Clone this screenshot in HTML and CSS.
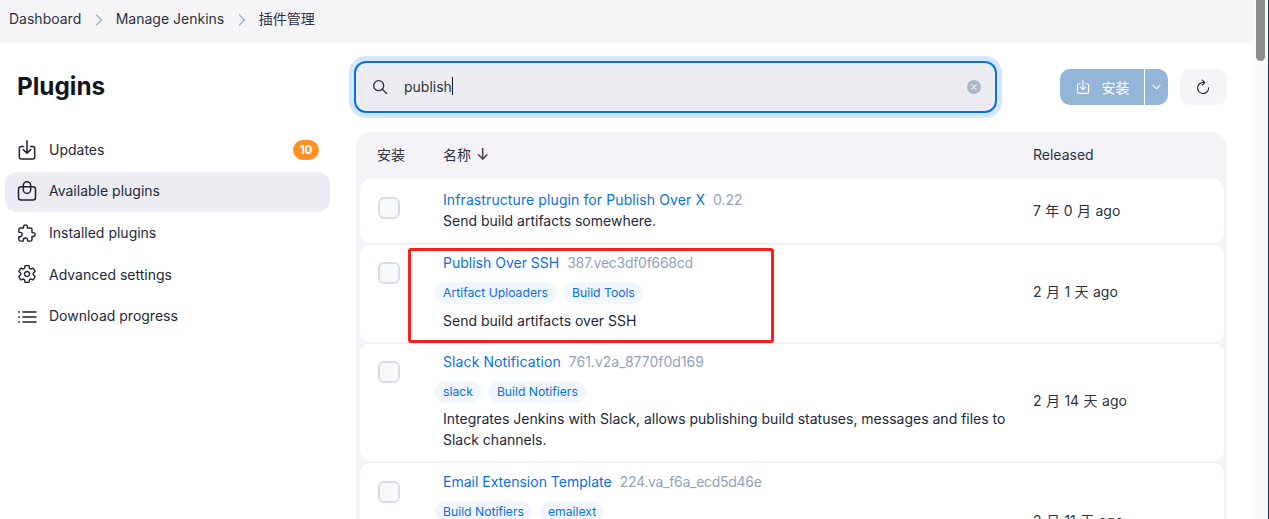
FILE: index.html
```html
<!DOCTYPE html>
<html lang="zh">
<head>
<meta charset="utf-8">
<title>Plugins</title>
<link rel="stylesheet" href="styles.css">
</head>
<body>
<div class="window">
  <div class="page">
    <nav class="crumbs">
      <a>Dashboard</a>
      <svg class="crumb-sep" viewBox="0 0 8 12"><path d="M1.500 1 6.500 6l-5 5"/></svg>
      <a>Manage Jenkins</a>
      <svg class="crumb-sep" viewBox="0 0 8 12"><path d="M1.500 1 6.500 6l-5 5"/></svg>
      <a>插件管理</a>
    </nav>
    <div class="layout">
      <aside class="side">
        <h1 class="side-title">Plugins</h1>
        <ul class="side-list">
          <li class="side-item">
            <svg class="side-icon" viewBox="0 0 20 20"><path d="M6.500 6.500H4.300a2 2 0 0 0-2 2V17a2 2 0 0 0 2 2h11.400a2 2 0 0 0 2-2V8.500a2 2 0 0 0-2-2h-2.200M10 .8V13M6.300 9.600 10 13.300l3.700-3.700"/></svg>
            <span>Updates</span><span class="badge">10</span>
          </li>
          <li class="side-item is-active">
            <svg class="side-icon" viewBox="0 0 20 20"><rect x="1.500" y="5.800" width="17" height="13.200" rx="2.500"/><path d="M6.300 5.800V4.500a3.700 3.700 0 0 1 7.400 0v1.300M6.300 5.800v2.700a3.700 4 0 0 0 7.400 0V5.800"/></svg>
            <span>Available plugins</span>
          </li>
          <li class="side-item">
            <svg class="side-icon puzzle" viewBox="0 0 512 512"><path d="M413.66 246.1H386a2 2 0 01-2-2v-77.24A38.86 38.86 0 00345.14 128H267.9a2 2 0 01-2-2V98.34c0-27.14-21.5-49.86-48.64-50.33a49.53 49.53 0 00-50.4 49.51V126a2 2 0 01-2 2H87.62A39.74 39.74 0 0048 167.62V238a2 2 0 002 2h26.91c29.37 0 53.68 25.48 54.09 54.85.42 29.87-23.51 57.15-53.29 57.15H50a2 2 0 00-2 2v70.38A39.74 39.74 0 0087.62 464H158a2 2 0 002-2v-20.93c0-30.28 24.75-56.35 55-57.06 30.1-.7 57 20.31 57 50.28V462a2 2 0 002 2h71.14A38.86 38.86 0 00384 425.14v-78a2 2 0 012-2h28.48c27.63 0 49.52-22.67 49.52-50.4s-23.2-48.64-50.34-48.64z"/></svg>
            <span>Installed plugins</span>
          </li>
          <li class="side-item">
            <svg class="side-icon puzzle" viewBox="0 0 512 512"><path d="M262.29 192.31a64 64 0 1057.4 57.4 64.13 64.13 0 00-57.4-57.4zM416.39 256a154.34 154.34 0 01-1.53 20.79l45.21 35.46a10.81 10.81 0 012.45 13.75l-42.77 74a10.81 10.81 0 01-13.14 4.59l-44.9-18.08a16.11 16.11 0 00-15.17 1.75A164.48 164.48 0 01325 400.8a15.94 15.94 0 00-8.82 12.14l-6.73 47.89a11.08 11.08 0 01-10.68 9.17h-85.54a11.11 11.11 0 01-10.69-8.87l-6.72-47.82a16.07 16.07 0 00-9-12.22 155.3 155.3 0 01-21.46-12.57 16 16 0 00-15.11-1.71l-44.89 18.07a10.81 10.81 0 01-13.14-4.58l-42.77-74a10.8 10.8 0 012.45-13.75l38.21-30a16.05 16.05 0 006-14.08c-.36-4.17-.58-8.33-.58-12.5s.21-8.27.58-12.35a16 16 0 00-6.07-13.94l-38.19-30A10.81 10.81 0 0149.48 186l42.77-74a10.81 10.81 0 0113.14-4.59l44.9 18.08a16.11 16.11 0 0015.17-1.75A164.48 164.48 0 01187 111.2a15.94 15.94 0 008.82-12.14l6.73-47.89A11.08 11.08 0 01213.23 42h85.54a11.11 11.11 0 0110.69 8.87l6.72 47.82a16.07 16.07 0 009 12.22 155.3 155.3 0 0121.46 12.57 16 16 0 0015.11 1.71l44.89-18.07a10.81 10.81 0 0113.14 4.58l42.77 74a10.8 10.8 0 01-2.45 13.75l-38.21 30a16.05 16.05 0 00-6.05 14.08c.33 4.14.55 8.3.55 12.47z"/></svg>
            <span>Advanced settings</span>
          </li>
          <li class="side-item">
            <svg class="side-icon" viewBox="0 0 20 20"><path d="M6 6h13M6 11h13M6 16h13M1.800 6h.6M1.800 11h.6M1.800 16h.6"/></svg>
            <span>Download progress</span>
          </li>
        </ul>
      </aside>
      <main class="main">
        <div class="toolbar">
          <div class="search">
            <svg class="search-icon" viewBox="0 0 16 16"><circle cx="6.700" cy="6.700" r="5"/><path d="m10.500 10.500 4 4"/></svg>
            <span class="search-text">publish</span><span class="caret"></span>
            <svg class="search-clear" viewBox="0 0 14 14"><circle cx="7" cy="7" r="7"/><path d="m4.800 4.800 4.400 4.400m0-4.400-4.400 4.400"/></svg>
          </div>
          <div class="split">
            <button class="btn-install">
              <svg class="btn-icon" viewBox="0 0 20 20"><path d="M6.500 6H4.800A1.800 1.800 0 0 0 3 7.800v8.400A1.800 1.800 0 0 0 4.800 18h10.400a1.800 1.800 0 0 0 1.800-1.800V7.800A1.800 1.800 0 0 0 15.200 6h-1.700M10 1.500V13M6.500 9.800 10 13.300l3.500-3.500"/></svg>
              <span>安装</span>
            </button>
            <button class="btn-caret"><svg class="btn-chevron" viewBox="0 0 10 6"><path d="m1 1 4 4 4-4"/></svg></button>
          </div>
          <button class="btn-refresh">
            <svg class="refresh-icon" viewBox="0 0 20 20"><path d="M10.800 4.200A6.500 6.500 0 1 0 16 10.500M8.500 1.200l3 3-3 3"/></svg>
          </button>
        </div>
        <div class="table">
          <div class="thead">
            <span class="col-check col-check-head">安装</span>
            <span class="col-name">名称 <span class="sort">↓</span></span>
            <span class="col-date">Released</span>
          </div>
          <div class="row row-short">
            <div class="col-check"><span class="check"></span></div>
            <div class="col-name">
              <div class="title-line"><a class="title title-wide">Infrastructure plugin for Publish Over X</a><span class="version">0.22</span></div>
              <p class="desc">Send build artifacts somewhere.</p>
            </div>
            <div class="col-date">7 年 0 月 ago</div>
          </div>
          <div class="row">
            <div class="col-check"><span class="check"></span></div>
            <div class="col-name">
              <div class="title-line"><a class="title">Publish Over SSH</a><span class="version version-tight">387.vec3df0f668cd</span></div>
              <div class="tags"><span class="tag">Artifact Uploaders</span><span class="tag">Build Tools</span></div>
              <p class="desc">Send build artifacts over SSH</p>
            </div>
            <div class="col-date">2 月 1 天 ago</div>
          </div>
          <div class="row">
            <div class="col-check"><span class="check"></span></div>
            <div class="col-name">
              <div class="title-line"><a class="title title-wide">Slack Notification</a><span class="version">761.v2a_8770f0d169</span></div>
              <div class="tags"><span class="tag">slack</span><span class="tag">Build Notifiers</span></div>
              <p class="desc">Integrates Jenkins with Slack, allows publishing build statuses, messages and files to Slack channels.</p>
            </div>
            <div class="col-date">2 月 14 天 ago</div>
          </div>
          <div class="row">
            <div class="col-check"><span class="check"></span></div>
            <div class="col-name">
              <div class="title-line"><a class="title">Email Extension Template</a><span class="version version-tight">224.va_f6a_ecd5d46e</span></div>
              <div class="tags"><span class="tag">Build Notifiers</span><span class="tag">emailext</span></div>
              <p class="desc">This plugin allows administrators to create global templates for the Extended Email Publisher.</p>
            </div>
            <div class="col-date">2 月 11 天 ago</div>
          </div>
        </div>
      </main>
    </div>
    <div class="highlight"></div>
  </div>
  <div class="scrollbar"><div class="thumb"></div></div>
</div>
</body>
</html>
```
FILE: styles.css
```css
* { box-sizing: border-box; }
html, body { margin: 0; height: 100%; overflow: hidden; }
body {
  font-family: Inter, "Noto Sans CJK SC", sans-serif;
  font-size: 14px;
  line-height: 21px;
  color: #1f2330;
  background: #fff;
}
svg { display: block; fill: none; stroke: currentColor; stroke-linecap: round; stroke-linejoin: round; }
p, h1, ul { margin: 0; padding: 0; }
ul { list-style: none; }
button { border: 0; padding: 0; font: inherit; }

.window { display: flex; height: 519px; overflow: hidden; }
.page { flex: 1; min-width: 0; position: relative; overflow: hidden; }
.scrollbar { width: 16px; flex: none; background: #fafafa; padding: 0 3px; border-right: 1px solid #1b3b72; }
.thumb { width: 9px; height: 61px; background: #8b8b8b; border-radius: 0 0 5px 5px; }

.crumbs {
  height: 43px;
  background: #f5f5f8;
  display: flex;
  align-items: center;
  padding: 0 0 7px 9px;
  color: #2d3140;
}
.crumb-sep { width: 8px; height: 12px; margin: 3px 13px 0 13.500px; color: #a3b2c7; stroke-width: 1.400; }

.layout { display: flex; }
.side { width: 325px; margin-left: 5px; flex: none; }
.side-title { font-size: 24.300px; line-height: 32px; font-weight: 700; color: #14161f; margin: 27px 0 0 12px; }
.side-list { margin-top: 28px; display: flex; flex-direction: column; gap: 1.500px; }
.side-item { height: 40px; display: flex; align-items: center; padding: 0 11px 1px 12px; border-radius: 12px; gap: 12px; color: #24283a; }
.side-item.is-active { background: #ecedf2; padding-bottom: 2px; }
.side-icon { width: 20px; height: 20px; flex: none; stroke-width: 1.500; color: #1f2330; }
.side-icon.puzzle { stroke-width: 36; }
.badge { margin-left: auto; width: 26px; height: 20px; border-radius: 10px; background: #ff9123; color: #fff; font-size: 11.500px; font-weight: 700; line-height: 20px; text-align: center; }

.main { width: 870px; margin-left: 27px; flex: none; }
.toolbar { display: flex; align-items: flex-start; margin-top: 18px; }
.search {
  width: 643px; height: 52px;
  margin-left: -3px;
  border: 2px solid #0a6fe8;
  border-radius: 12px;
  background: #ecedf3;
  box-shadow: 0 0 0 5px #d5e7fb;
  display: flex;
  align-items: center;
  padding: 0 14px 0 16px;
}
.search-icon { width: 16px; height: 16px; stroke-width: 1.300; color: #2d3140; flex: none; margin-right: 16px; }
.search-text { color: #2d3140; margin-bottom: 2px; }
.caret { width: 1px; height: 18px; background: #14161f; margin-bottom: 2px; }
.search-clear { width: 14px; height: 14px; margin-left: auto; }
.search-clear circle { fill: #adb5c8; stroke: none; }
.search-clear path { stroke: #ecedf3; stroke-width: 1.200; }

.split { display: flex; gap: 1px; margin: 8px 0 0 63px; }
.btn-install { width: 84px; height: 36px; background: #94b5d7; color: #fff; border-radius: 10px 0 0 10px; display: flex; align-items: center; justify-content: center; gap: 11px; }
.btn-icon { width: 16px; height: 16px; stroke-width: 1.400; }
.btn-caret { width: 23px; height: 36px; background: #94b5d7; color: #fff; border-radius: 0 10px 10px 0; display: flex; align-items: center; justify-content: center; }
.btn-chevron { width: 9px; height: 6px; stroke-width: 1.200; }
.btn-refresh { width: 47px; height: 36px; margin: 8px 0 0 12px; background: #f5f5f8; border-radius: 10px; display: flex; align-items: center; justify-content: center; color: #1f2330; }
.refresh-icon { width: 17px; height: 17px; stroke-width: 1.300; }

.table { margin: 19px 0 0 -1px; background: #f2f2f7; border-radius: 16px; padding: 0 3px 0 4px; display: flex; flex-direction: column; gap: 2px; }
.thead { height: 45px; display: flex; align-items: center; color: #2d3140; }
.row { background: #fff; border-radius: 10px; display: flex; padding: 7.400px 0 10.700px; }
.row-short { min-height: 64px; padding: 10px 0 11px; }
.col-check { width: 83px; flex: none; padding-left: 18px; }
.col-check-head { padding-left: 17px; }
.col-name { width: 590px; flex: none; }
.col-date { align-self: center; color: #2d3140; word-spacing: .5px; }
.check { display: block; width: 22px; height: 22px; margin-top: 10px; border: 2px solid #d7dce7; border-radius: 6px; background: #f8f9fb; }
.row-short .check { margin-top: 8px; }
.sort { font-size: 16px; margin-left: 1px; }

.title-line { display: flex; gap: 8px; }
.title { color: #0a6fe8; }
.title-wide { letter-spacing: .1px; }
.version { color: #92a3ba; }
.version-tight { letter-spacing: -.28px; }
.tags { display: flex; gap: 8px; margin: 9px 0 5.500px -8px; }
.tag { height: 22px; line-height: 22px; padding: 0 8px; border-radius: 11px; background: #f1f6fd; color: #0a6fe8; font-size: 12.200px; }
.desc { color: #23273a; }

.highlight { position: absolute; left: 408px; top: 248px; width: 366px; height: 95px; border: 3px solid #fb2020; border-radius: 3px; }
```
